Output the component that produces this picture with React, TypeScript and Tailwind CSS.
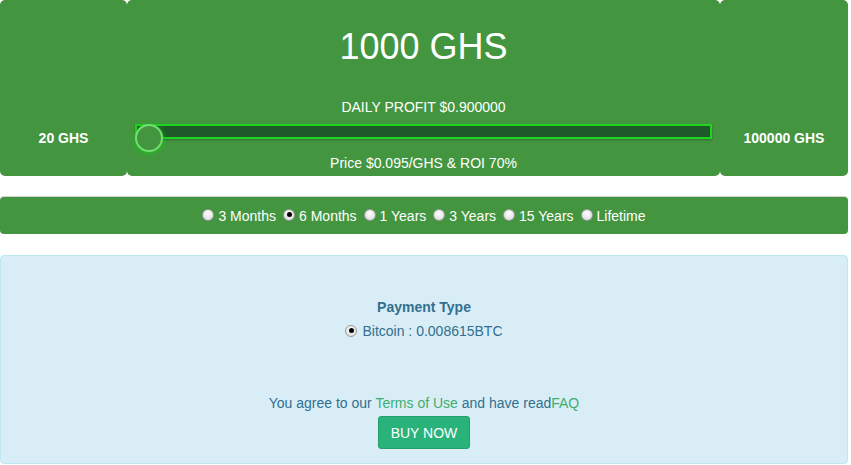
import React from "react";

const terms = ["3 Months", "6 Months", "1 Years", "3 Years", "15 Years", "Lifetime"];

function Radio({ checked }: { checked?: boolean }) {
  return (
    <span className="inline-flex h-[12px] w-[12px] items-center justify-center rounded-full border border-[#9a9a9a] bg-[radial-gradient(circle_at_50%_35%,#ffffff,#d6d6d6)] -translate-y-[1px]">
      {checked && <span className="h-[5px] w-[5px] rounded-full bg-black" />}
    </span>
  );
}

export default function App() {
  return (
    <div className="w-[848px] bg-white text-white" style={{ fontFamily: '"Liberation Sans", Arial, sans-serif' }}>
      {/* Hashrate slider */}
      <div className="flex h-[176px]">
        <div className="w-[127px] shrink-0 rounded-[5px] bg-[#43963f] pt-[128px] text-center text-[14px] font-bold leading-[20px]">
          20 GHS
        </div>
        <div className="flex-1 rounded-[5px] bg-[#43963f] pt-[27px] text-center">
          <div className="text-[36px] leading-[40px]">1000 GHS</div>
          <div className="mt-[30px] text-[14px] leading-[20px]">DAILY PROFIT $0.900000</div>
          <div className="relative mt-[1px] h-[28px] px-[8px]">
            <div className="mt-[7px] h-[15px] border-2 border-[#1fd41f] bg-[#1e5a29] shadow-[0_1px_2px_rgba(0,0,0,0.3)]" />
            <div className="absolute left-[8px] top-0 h-[28px] w-[28px] rounded-full border-2 border-[#72dd72] bg-[#43963f] shadow-[0_1px_5px_#19c419]" />
          </div>
          <div className="mt-[1px] text-[14px] leading-[20px]">Price $0.095/GHS &amp; ROI 70%</div>
        </div>
        <div className="w-[128px] shrink-0 rounded-[5px] bg-[#43963f] pt-[128px] text-center text-[14px] font-bold leading-[20px]">
          100000 GHS
        </div>
      </div>

      {/* Contract term */}
      <div className="mt-[21px] flex h-[37px] items-center justify-center gap-[7px] rounded-[4px] bg-[#43963f] text-[14px] leading-[20px] shadow-[0_-1px_0_#d2d2d2]">
        {terms.map((t, i) => (
          <label key={t} className="flex items-center gap-[4px]">
            <Radio checked={i === 1} />
            <span>{t}</span>
          </label>
        ))}
      </div>

      {/* Payment */}
      <div className="mt-[21px] h-[209px] rounded-[4px] border border-[#bce8f1] bg-[#d9edf7] pt-[41px] text-center text-[14px] leading-[20px] text-[#31708f]">
        <div className="font-bold">Payment Type</div>
        <div className="mt-[4px] flex items-center justify-center gap-[5px]">
          <span className="-translate-y-[2px]">
            <Radio checked />
          </span>
          <span>Bitcoin : 0.008615BTC</span>
        </div>
        <div className="mt-[52px]">
          You agree to our <a className="text-[#3daf6c]">Terms of Use</a> and have read<a className="text-[#3daf6c]">FAQ</a>
        </div>
        <button className="mt-[3px] h-[33px] rounded-[3px] border border-[#24a06c] bg-[#2ab27b] px-[12px] text-[14px] leading-[20px] text-white">
          BUY NOW
        </button>
      </div>
    </div>
  );
}
